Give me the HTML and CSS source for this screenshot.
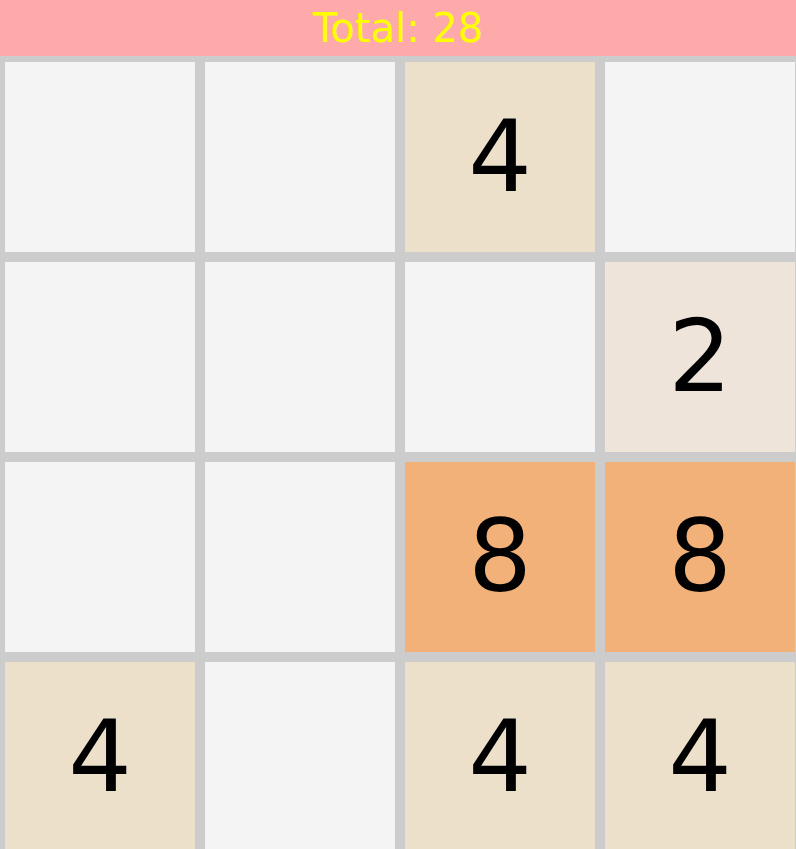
FILE: index.html
```html
<!DOCTYPE html>
<html>
<head>
<meta charset="utf-8">
<link rel="stylesheet" href="styles.css">
</head>
<body>
<div class="header">Total: 28</div>
<div class="board">
  <div class="cell"></div>
  <div class="cell"></div>
  <div class="cell t4">4</div>
  <div class="cell"></div>
  <div class="cell"></div>
  <div class="cell"></div>
  <div class="cell"></div>
  <div class="cell t2">2</div>
  <div class="cell"></div>
  <div class="cell"></div>
  <div class="cell t8">8</div>
  <div class="cell t8">8</div>
  <div class="cell t4">4</div>
  <div class="cell"></div>
  <div class="cell t4">4</div>
  <div class="cell t4">4</div>
</div>
</body>
</html>
```
FILE: styles.css
```css
html, body {
  margin: 0;
  padding: 0;
  overflow: hidden;
  background: #cccccc;
  font-family: "DejaVu Sans", sans-serif;
}
.header {
  height: 56px;
  line-height: 56px;
  background: #ffaaaa;
  color: #ffff00;
  text-align: center;
  font-size: 40px;
}
.board {
  width: 800px;
  box-sizing: border-box;
  display: grid;
  grid-template-columns: repeat(4, 190px);
  grid-auto-rows: 190px;
  gap: 10px;
  padding: 6px 5px;
  background: #cccccc;
}
.cell {
  background: #f4f4f4;
  color: #000000;
  font-size: 100px;
  line-height: 190px;
  text-align: center;
}
.t2 { background: #eee4da; }
.t4 { background: #ece0ca; }
.t8 { background: #f2b179; }
```
